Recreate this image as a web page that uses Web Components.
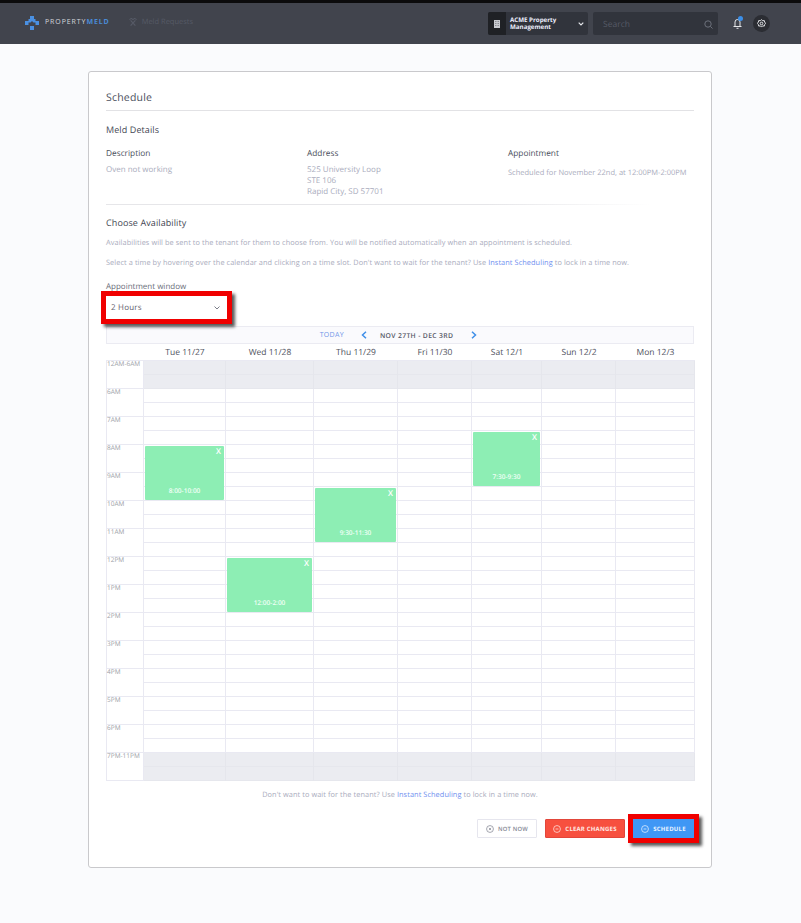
<!DOCTYPE html>
<html>
<head>
<meta charset="utf-8">
<title>Schedule</title>
<style>
  html, body { margin: 0; padding: 0; }
  body { background: #fafbfd; font-family: "Open Sans", sans-serif; color: #4b4f5c; text-rendering: geometricPrecision; }
</style>
</head>
<body>
<pm-nav></pm-nav>
<pm-page>
  <pm-schedule></pm-schedule>
</pm-page>

<script>
class PmNav extends HTMLElement {
  connectedCallback() {
    this.attachShadow({ mode: 'open' });
    this.shadowRoot.innerHTML = `
      <style>
        :host { display: flex; align-items: center; box-sizing: border-box; height: 44px; background: #41444d; border-top: 3px solid #0b0b0c; padding: 0 31px 3px 25px; font-family: "Open Sans", sans-serif; }
        .logo { display: flex; align-items: center; gap: 6px; margin-top: 2px; }
        .word { font-size: 7px; letter-spacing: .9px; color: #d5d7dc; line-height: 10px; white-space: nowrap; }
        .word b { color: #4a8bd6; font-weight: 700; }
        .link { display: flex; align-items: center; gap: 5px; margin-left: 19px; color: #565a66; font-size: 7.5px; white-space: nowrap; }
        .right { margin-left: auto; display: flex; align-items: center; }
        .org { display: flex; align-items: center; width: 100px; height: 23px; background: #31343c; border-radius: 2px; overflow: hidden; margin-top: 3px; }
        .tile { width: 18px; height: 23px; background: #1f2125; display: flex; align-items: center; justify-content: center; }
        .name { flex: 1; padding-left: 4px; color: #eef0ff; font-size: 6.2px; font-weight: 700; line-height: 6.5px; padding-right: 14px; }
        .org svg.chev { margin-right: 4px; flex: none; }
        .search { display: flex; align-items: center; justify-content: space-between; box-sizing: border-box; width: 125px; height: 23px; margin: 3px 0 0 5px; background: #31343c; border-radius: 2px; padding: 1px 5px 0 10px; color: #565a66; font-size: 8.5px; }
        .bell { position: relative; display: flex; margin: 3px 0 0 15px; }
        .dot { position: absolute; top: -2px; right: -1px; width: 5px; height: 5px; border-radius: 50%; background: #3b8fe8; }
        .gear { display: flex; align-items: center; justify-content: center; width: 17px; height: 17px; margin: 3px 0 0 11px; border-radius: 50%; background: #2b2d33; }
      </style>
      <div class="logo">
        <svg width="14" height="14" viewBox="0 0 14 14"><path d="M5 0h4v3h1.500v2H14v4h-3.500V6.500h-2L7 5 5.500 6.500h-2V9H0V5h3.500V3H5z" fill="#4a90e2"/><rect x="5" y="10" width="4" height="4" fill="#4a90e2"/></svg>
        <span class="word">PROPERTY<b>MELD</b></span>
      </div>
      <div class="link">
        <svg width="8" height="8" viewBox="0 0 10 10" fill="none" stroke="#565a66" stroke-width="1.500"><path d="M2 9.500 8 3M8 9.500 2 3"/><path d="M.5 2 3 .5 5 2M5 2 7 .5 9.500 2" stroke-width="1.300"/></svg>
        <span>Meld Requests</span>
      </div>
      <div class="right">
        <div class="org">
          <div class="tile"><svg width="6" height="8" viewBox="0 0 6 8"><rect width="6" height="8" fill="#c9cbd0"/><path d="M1 1h1.500v1H1zM3.500 1H5v1H3.500zM1 3h1.500v1H1zM3.500 3H5v1H3.500zM1 5h1.500v1H1zM3.500 5H5v1H3.500z" fill="#8a8c92"/></svg></div>
          <div class="name">ACME Property Management</div>
          <svg class="chev" width="6" height="4" viewBox="0 0 6 4" fill="none" stroke="#e4e6ea" stroke-width="1.200"><path d="M.7.7 3 3 5.300.7"/></svg>
        </div>
        <div class="search">
          <span>Search</span>
          <svg width="9" height="9" viewBox="0 0 9 9" fill="none" stroke="#6c707b" stroke-width="1"><circle cx="4" cy="4" r="3.200"/><path d="M6.400 6.400 8.500 8.500"/></svg>
        </div>
        <div class="bell">
          <svg width="9" height="11" viewBox="0 0 9 11" fill="none" stroke="#e6e7ea" stroke-width="1"><path d="M.5 8.500h8M2 8.500V4a2.500 2.500 0 0 1 5 0v4.500M3.500 10.300h2"/></svg>
          <span class="dot"></span>
        </div>
        <div class="gear">
          <svg width="9" height="9" viewBox="0 0 24 24" fill="none" stroke="#e6e7ea" stroke-width="2.600"><circle cx="12" cy="12" r="3.500"/><path d="M12 1.500l3 3.200 4.400-.6 1 4.300 3.100 3.100-3.100 3.100-1 4.300-4.400-.6-3 3.200-3-3.200-4.400.6-1-4.300L.5 11.500l3.100-3.100 1-4.300 4.400.6z"/></svg>
        </div>
      </div>`;
  }
}
customElements.define('pm-nav', PmNav);

class PmPage extends HTMLElement {
  connectedCallback() {
    this.attachShadow({ mode: 'open' });
    this.shadowRoot.innerHTML = `
      <style>
        :host { display: block; padding: 27px 89px 55px 88px; }
      </style>
      <slot></slot>`;
  }
}
customElements.define('pm-page', PmPage);

class PmInfo extends HTMLElement {
  connectedCallback() {
    this.attachShadow({ mode: 'open' });
    this.shadowRoot.innerHTML = `
      <style>
        :host { display: block; font-size: 8px; line-height: 11px; color: #aaacbd; }
        .label { color: #4b4f5c; margin-bottom: 4px; font-size: 8.3px; line-height: 12px; }
      </style>
      <div class="label">${this.getAttribute('label')}</div>
      <slot></slot>`;
  }
}
customElements.define('pm-info', PmInfo);

class PmButton extends HTMLElement {
  connectedCallback() {
    const kind = this.getAttribute('kind');
    const x = kind === 'plain' ? '<path d="M5 5l4 4M9 5l-4 4"/>' : '<path d="M4.500 7h5"/>';
    this.attachShadow({ mode: 'open' });
    this.shadowRoot.innerHTML = `
      <style>
        :host { display: inline-flex; align-items: center; justify-content: center; gap: 4px; box-sizing: border-box; height: 19px; border-radius: 1px; font-size: 6px; font-weight: 700; letter-spacing: .2px; white-space: nowrap; border: 1px solid transparent; }
        :host([kind=plain]) { background: #fff; border-color: #e6e6ee; color: #858894; font-weight: 600; width: 60px; font-size: 5.8px; }
        :host([kind=danger]) { background: #f7503f; border-color: #e2463a; color: #ffe9e4; width: 80px; }
        :host([kind=primary]) { background: #3f97f5; color: #e9f3ff; width: 61px; border-radius: 0; outline: 5px solid #f00000; box-shadow: 3px 3px 3px 5px rgba(0,0,0,.65); }
        svg { stroke: currentColor; fill: none; }
      </style>
      <svg width="8" height="8" viewBox="0 0 14 14" stroke-width="1.300"><circle cx="7" cy="7" r="6"/>${x}</svg>
      <slot></slot>`;
  }
}
customElements.define('pm-button', PmButton);

class PmCalendar extends HTMLElement {
  connectedCallback() {
    const days = ['Tue 11/27', 'Wed 11/28', 'Thu 11/29', 'Fri 11/30', 'Sat 12/1', 'Sun 12/2', 'Mon 12/3'];
    const rows = ['12AM-6AM', '6AM', '7AM', '8AM', '9AM', '10AM', '11AM', '12PM', '1PM', '2PM', '3PM', '4PM', '5PM', '6PM', '7PM-11PM'];
    const events = [
      { day: 0, top: 86, h: 54, text: '8:00-10:00' },
      { day: 1, top: 198, h: 54, text: '12:00-2:00' },
      { day: 2, top: 128, h: 54, text: '9:30-11:30' },
      { day: 4, top: 72, h: 54, text: '7:30-9:30' }
    ];
    let body = '';
    rows.forEach((r, i) => {
      const off = i === 0 || i === rows.length - 1;
      body += `<div class="time">${r}</div>`;
      days.forEach(() => {
        body += `<div class="cell ${off ? 'off' : ''}"><i></i><i></i></div>`;
      });
    });
    const evs = events.map(e => `
      <div class="event" style="grid-column:${e.day + 2};margin-top:${e.top}px;height:${e.h}px">
        <span class="x">X</span><span class="t">${e.text}</span>
      </div>`).join('');
    this.attachShadow({ mode: 'open' });
    this.shadowRoot.innerHTML = `
      <style>
        :host { display: block; width: 589px; font-size: 8.5px; }
        .bar { display: flex; align-items: center; justify-content: center; box-sizing: border-box; width: 588px; height: 18px; background: #fafafd; border: 1px solid #ebebf2; padding-right: 3px; }
        .today { color: #6f96e8; font-size: 7px; letter-spacing: .3px; margin: 1px 17px 0 0; }
        .range { color: #555866; font-size: 6.800px; font-weight: 600; letter-spacing: .35px; margin: 0 18px 0 13px; }
        .head, .grid, .layer { display: grid; grid-template-columns: 38px 82px 88px 84px 74px 70px 74px 79px; }
        .head { height: 16px; align-items: center; text-align: center; color: #4f5260; font-size: 8.5px; }
        .wrap { position: relative; }
        .grid { border-top: 1px solid #e9e9f2; }
        .time { box-sizing: border-box; height: 28px; border: solid #e9e9f2; border-width: 0 1px 1px 1px; color: #9d9fa8; font-size: 6.500px; line-height: 5px; white-space: nowrap; }
        .cell { box-sizing: border-box; height: 28px; border-right: 1px solid #e9e9f2; }
        .cell i { display: block; box-sizing: border-box; height: 14px; border-bottom: 1px solid #e9e9f2; }
        .cell.off { background: #ebecf1; border-color: #e5e6ec; }
        .cell.off i { border-color: #e6e7ed; }
        .layer { position: absolute; inset: 0; grid-template-rows: 1fr; pointer-events: none; }
        .event { grid-row: 1; box-sizing: border-box; align-self: start; margin-left: 1px; margin-right: 2px; background: #8deeb4; border-radius: 1px; color: #f0fff6; position: relative; font-size: 6.500px; font-weight: 600; text-align: center; }
        .x { position: absolute; top: 0; right: 3px; font-size: 8px; font-weight: 600; color: #fff; line-height: 12px; }
        .t { position: absolute; left: 0; right: 0; bottom: 5px; line-height: 9px; }
      </style>
      <div class="bar">
        <span class="today">TODAY</span>
        <svg width="6" height="8" viewBox="0 0 6 8" fill="none" stroke="#3f8fe8" stroke-width="1.500"><path d="M5 .7 1.500 4 5 7.300"/></svg>
        <span class="range">NOV 27TH - DEC 3RD</span>
        <svg width="6" height="8" viewBox="0 0 6 8" fill="none" stroke="#3f8fe8" stroke-width="1.500"><path d="M1 .7 4.500 4 1 7.300"/></svg>
      </div>
      <div class="head"><span></span>${days.map(d => `<span>${d}</span>`).join('')}</div>
      <div class="wrap">
        <div class="grid">${body}</div>
        <div class="layer">${evs}</div>
      </div>`;
  }
}
customElements.define('pm-calendar', PmCalendar);

class PmSchedule extends HTMLElement {
  connectedCallback() {
    this.attachShadow({ mode: 'open' });
    this.shadowRoot.innerHTML = `
      <style>
        :host { display: block; box-sizing: border-box; height: 797px; background: #fff; border: 1px solid #c9c9cc; border-radius: 3px; padding: 19px 17px 0 17px; font-family: "Open Sans", sans-serif; color: #4b4f5c; }
        h1 { font-size: 10.500px; font-weight: 400; line-height: 14px; margin: 0; padding-bottom: 5px; border-bottom: 1px solid #e2e2e5; letter-spacing: .2px; }
        h2 { font-size: 9px; font-weight: 400; line-height: 12px; margin: 0; letter-spacing: .1px; color: #444754; }
        .details { margin-top: 13px; }
        .cols { display: grid; grid-template-columns: 201px 201px 1fr; margin-top: 12px; height: 50px; }
        .sched { font-size: 7.500px; margin-top: 8px; white-space: nowrap; }
        .rule { height: 1px; margin-top: 6px; width: 545px; background: linear-gradient(90deg, #e6e6e9 70%, #fff); }
        .avail { margin-top: 12px; }
        p { font-size: 7.350px; line-height: 10px; margin: 9px 0 0; color: #aaacbd; letter-spacing: .08px; white-space: nowrap; }
        p + p { margin-top: 10px; }
        a { color: #6f8fef; text-decoration: none; }
        .lbl { font-size: 8px; line-height: 11px; color: #6b6e7a; margin-top: 13px; }
        .select { display: flex; align-items: center; justify-content: space-between; box-sizing: border-box; width: 121px; height: 23px; margin: 4px 0 7px; padding: 0 7px 0 5px; background: #fff; font-size: 8px; color: #5f626e; letter-spacing: .2px; outline: 5px solid #f00000; box-shadow: 3px 3px 3px 5px rgba(0,0,0,.65); position: relative; }
        .cta { text-align: center; font-size: 7.350px; line-height: 10px; color: #aaacbd; margin-top: 9px; letter-spacing: .08px; }
        .actions { display: flex; justify-content: flex-end; gap: 8px; margin-top: 19px; width: 588px; }
      </style>
      <h1>Schedule</h1>
      <div class="details">
        <h2>Meld Details</h2>
        <div class="cols">
          <pm-info label="Description">Oven not working</pm-info>
          <pm-info label="Address">525 University Loop<br>STE 106<br>Rapid City, SD 57701</pm-info>
          <pm-info label="Appointment"><div class="sched">Scheduled for November 22nd, at 12:00PM-2:00PM</div></pm-info>
        </div>
        <div class="rule"></div>
      </div>
      <div class="avail">
        <h2>Choose Availability</h2>
        <p>Availabilities will be sent to the tenant for them to choose from. You will be notified automatically when an appointment is scheduled.</p>
        <p>Select a time by hovering over the calendar and clicking on a time slot. Don't want to wait for the tenant? Use <a>Instant Scheduling</a> to lock in a time now.</p>
      </div>
      <div class="lbl">Appointment window</div>
      <div class="select"><span>2 Hours</span>
        <svg width="6" height="4" viewBox="0 0 6 4" fill="none" stroke="#7b7e89" stroke-width="1"><path d="M.5.5 3 3 5.500.5"/></svg>
      </div>
      <pm-calendar></pm-calendar>
      <div class="cta">Don't want to wait for the tenant? Use <a>Instant Scheduling</a> to lock in a time now.</div>
      <div class="actions">
        <pm-button kind="plain">NOT NOW</pm-button>
        <pm-button kind="danger">CLEAR CHANGES</pm-button>
        <pm-button kind="primary">SCHEDULE</pm-button>
      </div>`;
  }
}
customElements.define('pm-schedule', PmSchedule);
</script>
</body>
</html>
